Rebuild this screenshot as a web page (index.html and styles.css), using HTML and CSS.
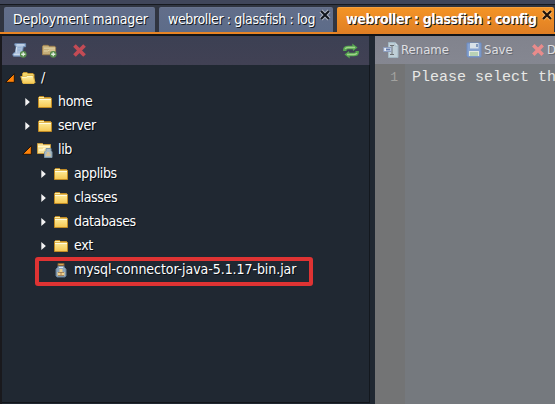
FILE: index.html
```html
<!DOCTYPE html>
<html lang="en">
<head>
<meta charset="utf-8">
<title>Deployment manager</title>
<link rel="stylesheet" href="styles.css">
</head>
<body>
<svg class="defs" aria-hidden="true">
  <defs>
    <linearGradient id="gold" x1="0" y1="0" x2="0" y2="1"><stop offset="0" stop-color="#fff4ac"/><stop offset="1" stop-color="#f5c750"/></linearGradient>
    <symbol id="folder" viewBox="0 0 16 16"><path d="M1.5 13.5V3.5L2.5 2.5H6.5L7.5 3.5H13.5L14.5 4.5V13.5Z" fill="url(#gold)" stroke="#c18b24"/><path d="M2 4.5H14" stroke="#e2b84f"/><path d="M2 5.5H14" stroke="#fffbe0"/></symbol>
    <symbol id="folder-open" viewBox="0 0 16 16"><path d="M2.5 12.5V3.5L3.5 2.5H7L8 3.5H13L14 4.5V12.5Z" fill="#f3d568" stroke="#c79731"/><path d="M.8 6.5H6L7.5 5.5H13L15 12.5L14 13.5H3Z" fill="url(#gold)" stroke="#dfb443"/><path d="M2 7.3H6.5L8 6.4H12.5" fill="none" stroke="#fffbd0"/></symbol>
    <symbol id="plus" viewBox="0 0 8 8"><circle cx="4" cy="4" r="3.6" fill="#568c4c"/><path d="M4 1.8V6.2M1.8 4H6.2" stroke="#e2eddf" stroke-width="1.4"/></symbol>
    <symbol id="right" viewBox="0 0 5 8"><path d="M.3 0L4.9 4L.3 8Z" fill="#f2f2f2"/></symbol>
    <symbol id="down" viewBox="0 0 10 10"><path d="M.7 9.3L9.3 .7V9.3Z" fill="#ff8208" stroke="#171008" stroke-width=".9"/></symbol>
    <symbol id="cross" viewBox="0 0 14 14"><path d="M2.3 2.3L11.7 11.7M11.7 2.3L2.3 11.7" stroke="currentColor" stroke-width="3.5"/></symbol>
    <symbol id="close" viewBox="0 0 12 12"><path d="M2 2L10 10M10 2L2 10" stroke="#ddd" stroke-opacity=".65" stroke-width="4"/><path d="M2 2L10 10M10 2L2 10" stroke="#12161c" stroke-width="2"/></symbol>
    <symbol id="close-active" viewBox="0 0 12 12"><path d="M2 2L10 10M10 2L2 10" stroke="#ffd090" stroke-opacity=".65" stroke-width="4"/><path d="M2 2L10 10M10 2L2 10" stroke="#20140c" stroke-width="2.3"/></symbol>
  </defs>
</svg>
<nav class="tabs">
  <div class="tab deploy"><span>Deployment manager</span></div>
  <div class="tab log"><span>webroller : glassfish : log</span><svg class="close"><use href="#close"/></svg></div>
  <div class="tab active"><span>webroller : glassfish : config</span><svg class="close"><use href="#close-active"/></svg></div>
</nav>
<main>
  <section class="files">
    <div class="toolbar">
      <svg class="tool" viewBox="0 0 16 16"><path d="M3 .8H14.5V4H12L11 10.5L13 14H1.5L.8 12L2 10.5H3.5L4.5 3.8L3 2.5Z" fill="#a9bfdc" stroke="#7192bb"/><path d="M5 2H13M5 4L4.2 10.5M2 12H9" stroke="#dae5f1"/><path d="M6 5H10M6 7.5H9" stroke="#8eadd1"/><use href="#plus" x="8" y="8" width="8" height="8"/></svg>
      <svg class="tool" viewBox="0 0 16 16"><path d="M.5 12.5V3.5L1.5 2.5H6.5L7.5 3.5H13.5L14.5 4.5V12.5Z" fill="#c5ae79" stroke="#a18250"/><path d="M2 5.5H14M2 8.5H6L7.5 7.5H14" fill="none" stroke="#e4d7ad"/><use href="#plus" x="8" y="8" width="8" height="8"/></svg>
      <svg class="tool delete" viewBox="0 0 14 14"><use href="#cross"/></svg>
      <svg class="refresh" viewBox="0 0 16 16"><path d="M1.8 8V6.5Q2 4.5 5 4.5H10" fill="none" stroke="#57a850" stroke-width="3.4"/><path d="M9.2 .5L14.5 4.5L10 8Z" fill="#57a850"/><path d="M14.2 8V9.5Q14 11.5 11 11.5H6" fill="none" stroke="#57a850" stroke-width="3.4"/><path d="M6.8 15.5L1.5 11.5L6 8Z" fill="#57a850"/><path d="M2.2 6Q3 4.5 5 4.5H12M13.8 10Q13 11.5 11 11.5H4" fill="none" stroke="#a1d28b" stroke-width="1.5"/></svg>
    </div>
    <div class="tree">
      <div class="row level0"><svg class="down"><use href="#down"/></svg><svg class="icon"><use href="#folder-open"/></svg><span>/</span></div>
      <div class="row level1"><svg class="right"><use href="#right"/></svg><svg class="icon"><use href="#folder"/></svg><span>home</span></div>
      <div class="row level1"><svg class="right"><use href="#right"/></svg><svg class="icon"><use href="#folder"/></svg><span>server</span></div>
      <div class="row level1"><svg class="down"><use href="#down"/></svg><svg class="icon" viewBox="0 0 16 16"><path d="M.5 11.5V1.5H5.5L6.5 2.5H13.5V11.5Z" fill="#f5df91" stroke="#c79a3c"/><path d="M1 4.5H13M2 8H6L7 6.5H12" fill="none" stroke="#fff7cb" stroke-width="1.5"/><path d="M9 6.5H14V8.5L15 10V15.5H7.5V10L9 8.5Z" fill="#a9bac1" stroke="#7d97a8"/><path d="M10 10H12.5V12H13.5V14H9V12H10Z" fill="#d7c195"/></svg><span>lib</span></div>
      <div class="row level2"><svg class="right"><use href="#right"/></svg><svg class="icon"><use href="#folder"/></svg><span>applibs</span></div>
      <div class="row level2"><svg class="right"><use href="#right"/></svg><svg class="icon"><use href="#folder"/></svg><span>classes</span></div>
      <div class="row level2"><svg class="right"><use href="#right"/></svg><svg class="icon"><use href="#folder"/></svg><span>databases</span></div>
      <div class="row level2"><svg class="right"><use href="#right"/></svg><svg class="icon"><use href="#folder"/></svg><span>ext</span></div>
      <div class="row level2 marked"><i class="right"></i><svg class="icon" viewBox="0 0 16 16"><path d="M5 3.5H11V5L13 7V14L12 15H4L3 14V7L5 5Z" fill="#8ca5bb" stroke="#647e96"/><path d="M5 1.5H11V3.5H5Z" fill="#d3aa58" stroke="#876338"/><path d="M6 5.5H10" stroke="#dce6ed"/><path d="M6.5 7H9.5V10H11.5V13.5H4.5V10H6.5Z" fill="#efd18e"/><path d="M5 10.5H11M8 10V13M5 13.5H11" stroke="#9b754b" stroke-width=".8"/></svg><span class="jar">mysql-connector-java-5.1.17-bin.jar</span></div>
    </div>
  </section>
  <section class="editor">
    <div class="edit-tools">
      <div class="action rename"><svg viewBox="0 0 16 16"><path d="M5.5 .5H12L15 3.5V15.5H5.5Z" fill="#bfcfd7" stroke="#a3b9c5"/><path d="M12 .5V4H15" fill="#e4ecef" stroke="#a3b9c5"/><path d="M7 3.5H11M9 3.5V12M7 12.5H11" stroke="#6e7377"/><path d="M.7 5.5H8V9.5H.7Z" fill="#e7edf4" stroke="#8c9dbf"/><path d="M3 7.5H7" stroke="#627bad" stroke-width="2"/></svg><span>Rename</span></div>
      <div class="action save"><svg viewBox="0 0 16 16"><path d="M1 1H15V15H2L1 14Z" fill="#86a2d0" stroke="#6d8cc3"/><path d="M4 1H12.5V6.5H4Z" fill="#d8e1e8"/><path d="M10 2H12V5H10Z" fill="#839abd"/><path d="M3 9H13V14H3Z" fill="#e1e9df"/><path d="M4 11H12M4 13H12" stroke="#91bb8d"/></svg><span>Save</span></div>
      <div class="action remove"><svg viewBox="0 0 14 14"><use href="#cross"/></svg><span>D</span></div>
    </div>
    <div class="code"><div class="gutter">1</div><code>Please select th</code></div>
  </section>
</main>
</body>
</html>
```
FILE: styles.css
```css
*, *::after { box-sizing: border-box; }
body { margin: 0; width: 555px; height: 404px; overflow: hidden; background: #1b1b1f; color: #fff; font: 14px "DejaVu Sans Condensed", "Noto Sans", sans-serif; }
svg { display: block; flex: none; }
.defs { position: absolute; width: 0; height: 0; }
.tabs { display: flex; height: 36px; padding: 2px 0 0 4px; gap: 4px; background: linear-gradient(#40465a 0 4px, #171a20 4px 5px, #303541 5px 32px, #e78424 32px 34px, #111419 34px); background-size: 100% 36px; }
.tab { position: relative; flex: none; height: 25px; margin-top: 5px; padding: 0 9px; line-height: 23px; background: linear-gradient(#626e8a, #5d6c89); border-top: 1px solid #68738d; border-radius: 2px 2px 0 0; text-shadow: 1px 1px 0 #141920; white-space: nowrap; }
.tab span { display: block; }
.deploy { width: 151px; letter-spacing: -.16px; }
.log { width: 174px; letter-spacing: -.37px; }
.tab.active { width: 217px; height: 27px; background: linear-gradient(#f49426, #df7e24); border-color: #f8a13d; font-weight: bold; letter-spacing: -.38px; }
.close { position: absolute; width: 12px; height: 12px; top: 1px; right: 2px; }
.active .close { right: 1px; }
main { display: flex; height: 368px; }
.files { width: 375px; padding-left: 2px; background: linear-gradient(90deg, #19191d 0 2px, #202832 2px); }
.toolbar { display: flex; align-items: center; width: 367px; height: 29px; padding: 0 10px; background: linear-gradient(#3c4053, #414154); }
.tool { width: 15px; height: 15px; margin-right: 15px; }
.delete { color: #c34b55; }
.refresh { width: 16px; height: 16px; margin-left: auto; }
.tree { width: 368px; height: 338px; border-right: 1px solid #13181e; border-bottom: 1px solid #12151a; }
.row { display: flex; align-items: center; height: 24px; line-height: 24px; text-shadow: 1px 1px 0 #080d13; white-space: nowrap; }
.level0 { padding-left: 3px; }
.level1 { padding-left: 19px; }
.level2 { padding-left: 35px; }
.row .down { width: 10px; height: 10px; margin: 2px 5px 0 0; }
.level1 .down { margin-left: 1px; }
.row .right { width: 5px; height: 8px; margin: 2px 7px 0 4px; flex: none; }
.icon { width: 16px; height: 16px; margin: 1px 5px 0 0; }
.row span { letter-spacing: -.35px; }
.row .jar { letter-spacing: -.06px; }
.marked { position: relative; }
.marked::after { content: ""; position: absolute; left: 33px; top: 0; width: 278px; height: 29px; border: 4px solid #df3333; border-radius: 3px; }
.editor { flex: 1; min-width: 0; overflow: hidden; background: #75797e; }
.edit-tools { display: flex; height: 28px; padding: 0 8px; background: linear-gradient(#81838d, #858791); color: #dfdfe2; text-shadow: 1px 1px 0 #666a71; font-size: 13px; }
.action { display: flex; flex: none; align-items: center; }
.action span { margin-top: -1px; }
.action svg { width: 16px; height: 16px; margin-right: 2px; }
.rename { width: 83px; }
.save { width: 65px; }
.remove { color: #dedee0; }
.action.remove svg { width: 14px; height: 14px; margin-right: 2px; color: #e98b8b; }
.action.remove span { letter-spacing: -1px; }
.code { display: flex; height: 340px; font: 15px/28px "Liberation Mono", monospace; }
.gutter { flex: none; width: 30px; padding-right: 7px; text-align: right; font-size: 13px; background: #737475; color: #a2a29f; }
code { padding-left: 7px; font: inherit; color: #e7e7e5; white-space: nowrap; }
```
